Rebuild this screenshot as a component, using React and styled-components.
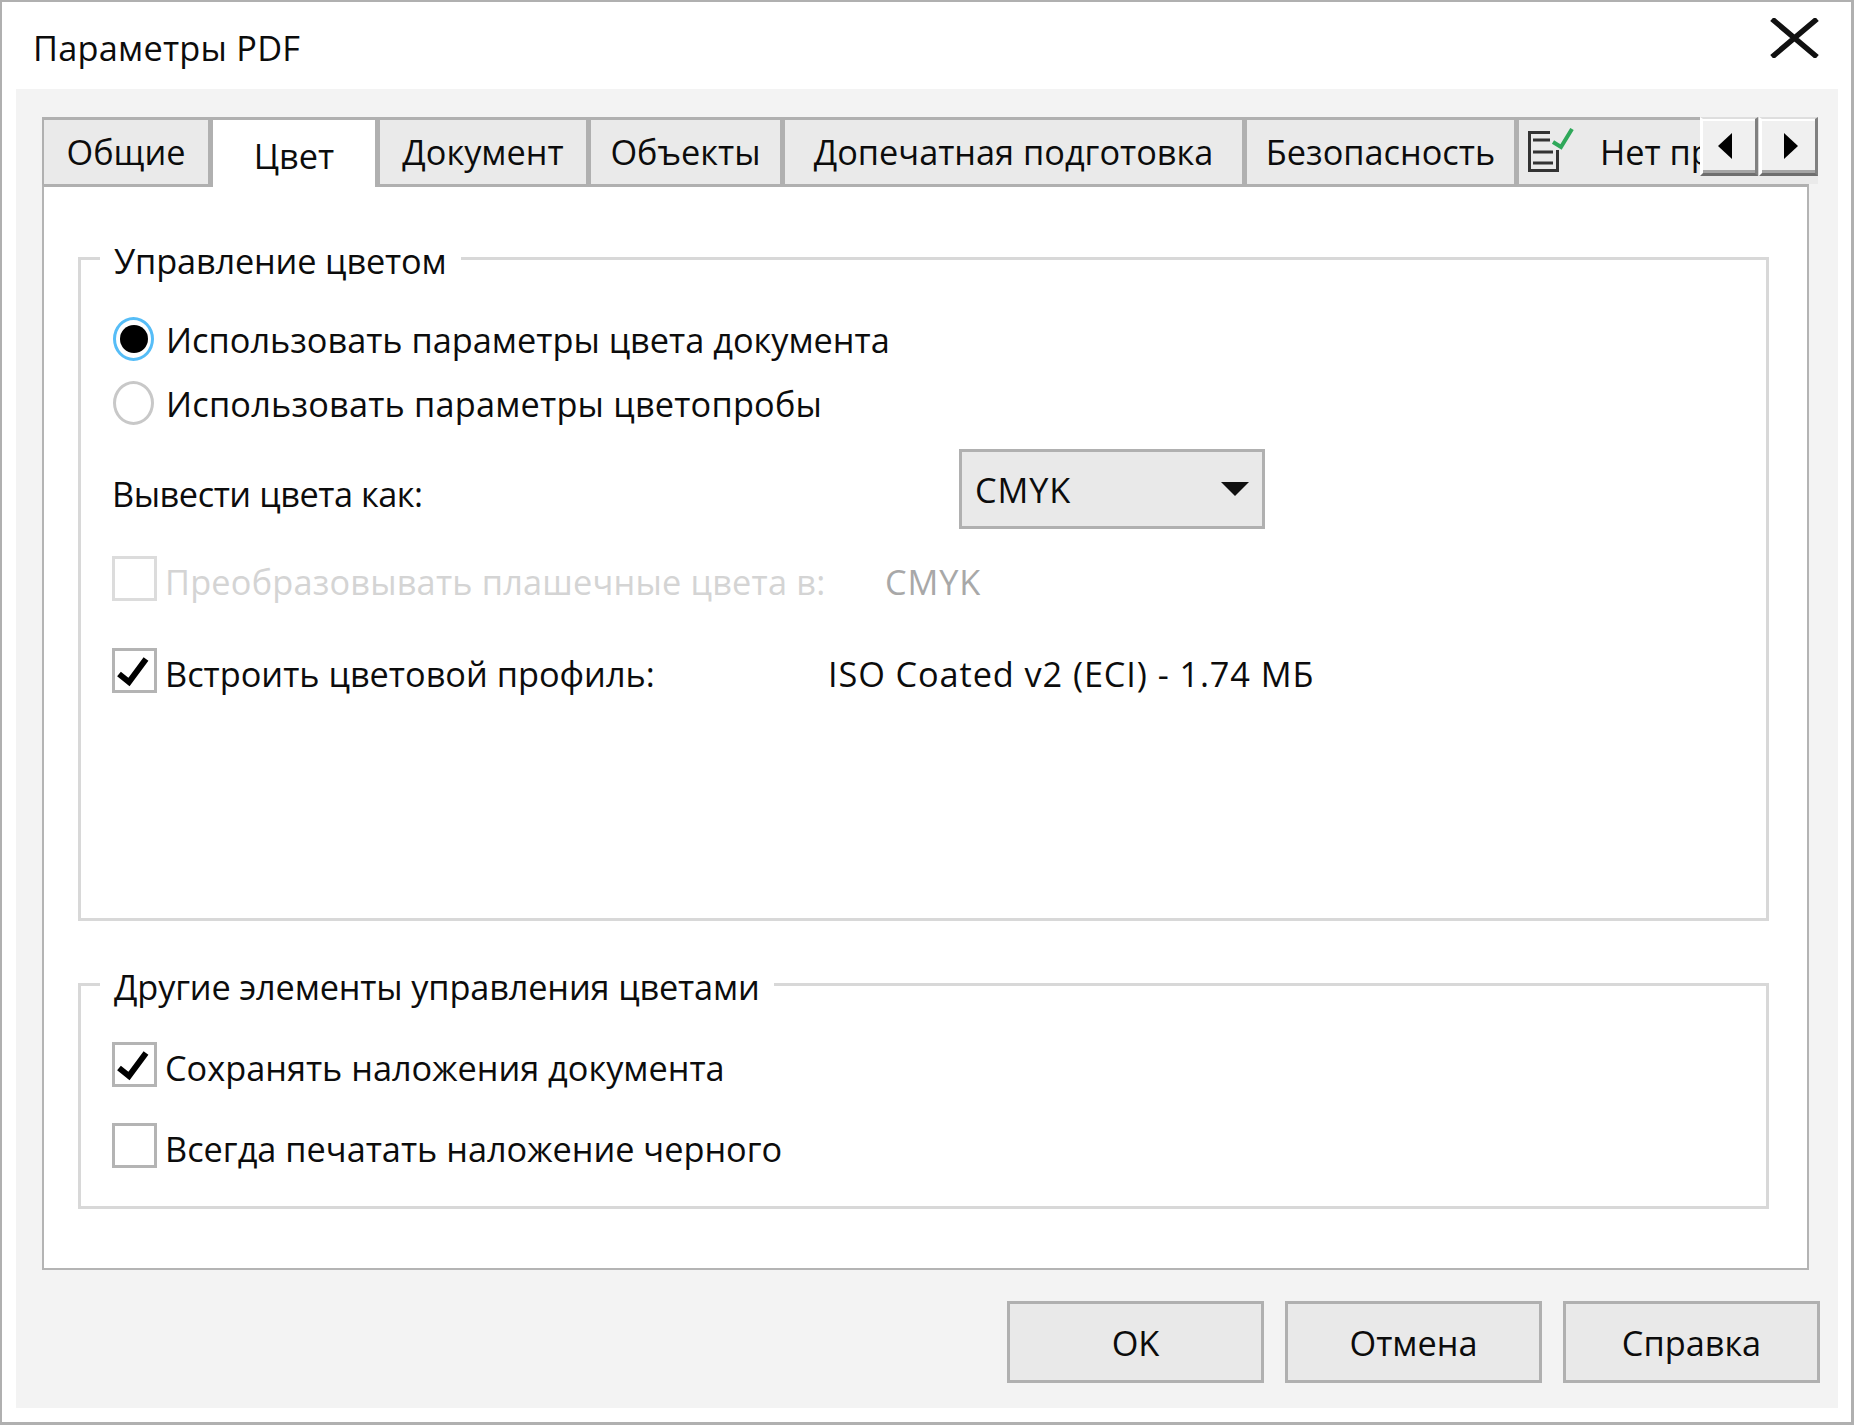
import React from 'react'
import styled, { createGlobalStyle } from 'styled-components'

const Global = createGlobalStyle`
	html, body { margin: 0; padding: 0; background: #fff; }
	body { font-family: "Open Sans", "Liberation Sans", sans-serif; font-size: 34.3px; color: #0c0c0c; }
	* { box-sizing: border-box; }
`

const Window = styled.div`
	width: 1854px;
	height: 1425px;
	border: 2px solid #b0b0b0;
	border-bottom-width: 3px;
	border-right-width: 3px;
	background: #fff;
	display: flex;
	flex-direction: column;
`

const TitleBar = styled.div`
	height: 87px;
	display: flex;
	align-items: center;
	justify-content: space-between;
	padding: 0 32px 0 31px;
`

const Title = styled.span`
	margin-top: 3px;
	letter-spacing: 0.25px;
`

const Body = styled.div`
	margin: 0 13px 0 14px;
	height: 1319px;
	background: #f3f3f3;
	padding: 28px 0 0 26px;
	display: flex;
	flex-direction: column;
`

const TabStrip = styled.div`
	width: 1776px;
	height: 67px;
	display: flex;
	position: relative;
	background: #eaeaea;
	border-top: 3px solid #b0b0b0;
`

const Tab = styled.div`
	width: ${p => p.$w}px;
	height: ${p => (p.$active ? 67 : 64)}px;
	flex: none;
	display: flex;
	align-items: center;
	justify-content: ${p => (p.$last ? 'flex-start' : 'center')};
	gap: 26px;
	padding-left: ${p => (p.$last ? 9 : 0)}px;
	padding-top: ${p => (p.$active ? 3 : 0)}px;
	padding-bottom: ${p => (p.$active ? 0 : 2)}px;
	white-space: nowrap;
	overflow: hidden;
	background: ${p => (p.$active ? '#fff' : '#eaeaea')};
	border-right: ${p => (p.$last ? 0 : 5)}px solid #b0b0b0;
	border-left: ${p => (p.$first ? 2 : 0)}px solid #b0b0b0;
	position: relative;
	z-index: ${p => (p.$active ? 1 : 0)};
`

const NavGroup = styled.div`
	position: absolute;
	top: -3px;
	right: 0;
	height: 59px;
	display: flex;
	gap: 1px;
	z-index: 2;
	background: #d8d8d8;
`

const NavButton = styled.div`
	width: ${p => p.$w}px;
	height: 59px;
	padding: 0 ${p => p.$pr || 0}px 0 ${p => p.$pl || 0}px;
	background: #f0f0f0;
	border-top: 2px solid #dedede;
	border-left: 3px solid #fff;
	border-right: 3px solid #808080;
	border-bottom: 3px solid #6e6e6e;
	box-shadow: inset 0 2px 0 #fff, inset 0 -3px 0 #a4a4a4;
	display: flex;
	align-items: center;
	justify-content: center;
`

const Panel = styled.div`
	width: 1767px;
	height: 1086px;
	background: #fff;
	border: 2px solid #b4b4b4;
	border-top: 3px solid #b0b0b0;
	padding: 51px 38px 0 34px;
	display: flex;
	flex-direction: column;
	gap: 43px;
`

const Group = styled.fieldset`
	margin: 0;
	padding: ${p => p.$top}px 0 0 31px;
	height: ${p => p.$h}px;
	border: 3px solid #d8d8d8;
	min-width: 0;
`

const Legend = styled.legend`
	margin-left: -12px;
	padding: 0 14px;
	line-height: 46px;
	height: 40px;
	letter-spacing: -0.15px;
`

const Row = styled.div`
	height: 64px;
	margin-top: ${p => p.$mt || 0}px;
	display: flex;
	align-items: center;
	white-space: nowrap;
`

const Check = styled.span`
	width: 45px;
	height: 45px;
	flex: none;
	margin-right: 8px;
	margin-top: -6px;
	background: #fff;
	border: 3px solid ${p => (p.$disabled ? '#dcdcdc' : '#b4b4b4')};
	display: flex;
	align-items: center;
	justify-content: center;
`

const Radio = styled.span`
	width: 41px;
	height: 44px;
	flex: none;
	margin: -1px 12px 0 1px;
	border-radius: 50%;
	background: #fff;
	border: 3px solid ${p => (p.$on ? '#56bdf7' : '#c8c8c8')};
	display: flex;
	align-items: center;
	justify-content: center;

	&::after {
		content: '';
		display: ${p => (p.$on ? 'block' : 'none')};
		width: 28px;
		height: 28px;
		border-radius: 50%;
		background: #000;
	}
`

const Label = styled.span`
	width: ${p => (p.$w ? p.$w + 'px' : 'auto')};
	flex: none;
	letter-spacing: ${p => p.$ls || 0}px;
	color: ${p => (p.$disabled ? '#d4d4d4' : 'inherit')};
`

const Latin = styled.span`
	letter-spacing: 0.9px;
	color: ${p => (p.$muted ? '#a8a8a8' : 'inherit')};
`

const Select = styled.div`
	width: 306px;
	height: 80px;
	margin-bottom: 8px;
	padding: 0 13px;
	background: #e9e9e9;
	border: 3px solid #b0b0b0;
	display: flex;
	align-items: center;
	justify-content: space-between;
`

const Footer = styled.div`
	margin-top: 31px;
	width: 1813px;
	margin-left: -26px;
	padding-left: 991px;
	display: flex;
	gap: 21px;
`

const Button = styled.div`
	width: 257px;
	height: 82px;
	background: #e9e9e9;
	border: 3px solid #b0b0b0;
	display: flex;
	align-items: center;
	justify-content: center;
`

const CloseSvg = styled.svg`
	margin-bottom: 15px;
`

const CloseIcon = () => (
	<CloseSvg width="49" height="40" viewBox="0 0 49 40">
		<path d="M2 1 L47 39 M47 1 L2 39" stroke="#111" strokeWidth="5.5" fill="none" />
	</CloseSvg>
)

const TickIcon = () => (
	<svg width="39" height="39" viewBox="0 0 39 39">
		<path d="M4 23 L14 31 L31 8" stroke="#000" strokeWidth="6" fill="none" />
	</svg>
)

const DocSvg = styled.svg`
	flex: none;
`

const DocIcon = () => (
	<DocSvg width="46" height="46" viewBox="0 0 46 46">
		<path d="M22 4.5 H1.5 V42.5 H29.5 V22" stroke="#333" strokeWidth="3" fill="none" />
		<path d="M5 12 H22 M5 24 H25 M5 35 H25" stroke="#333" strokeWidth="2.8" fill="none" />
		<path d="M25 14 L33 19 L44 1" stroke="#2fa85a" strokeWidth="4" fill="none" />
	</DocSvg>
)

const tabs = [
	{ label: 'Общие', w: 171, first: true },
	{ label: 'Цвет', w: 167, active: true },
	{ label: 'Документ', w: 211 },
	{ label: 'Объекты', w: 194 },
	{ label: 'Допечатная подготовка', w: 462 },
	{ label: 'Безопасность', w: 272 },
]

export default function App() {
	return (
		<Window>
			<Global />
			<TitleBar>
				<Title>Параметры PDF</Title>
				<CloseIcon />
			</TitleBar>
			<Body>
				<TabStrip>
					{tabs.map(t => (
						<Tab key={t.label} $w={t.w} $first={t.first} $active={t.active}>{t.label}</Tab>
					))}
					<Tab $w={299} $last><DocIcon />Нет проблем</Tab>
					<NavGroup>
						<NavButton $w={58} $pr={8}>
							<svg width="14" height="26" viewBox="0 0 14 26"><path d="M14 0 V26 L0 13 Z" fill="#000" /></svg>
						</NavButton>
						<NavButton $w={59} $pl={4}>
							<svg width="14" height="26" viewBox="0 0 14 26"><path d="M0 0 V26 L14 13 Z" fill="#000" /></svg>
						</NavButton>
					</NavGroup>
				</TabStrip>
				<Panel>
					<Group $h={683} $top={29}>
						<Legend>Управление цветом</Legend>
						<Row><Radio $on /><Label>Использовать параметры цвета документа</Label></Row>
						<Row><Radio /><Label $ls={0.2}>Использовать параметры цветопробы</Label></Row>
						<Row $mt={26}>
							<Label $w={847} $ls={-0.45}>Вывести цвета как:</Label>
							<Select>
								<Latin>CMYK</Latin>
								<svg width="28" height="14" viewBox="0 0 28 14"><path d="M0 0 H28 L14 14 Z" fill="#111" /></svg>
							</Select>
						</Row>
						<Row $mt={24}>
							<Check $disabled />
							<Label $w={720} $ls={0.2} $disabled>Преобразовывать плашечные цвета в:</Label>
							<Latin $muted>CMYK</Latin>
						</Row>
						<Row $mt={28}>
							<Check><TickIcon /></Check>
							<Label $w={663}>Встроить цветовой профиль:</Label>
							<Latin>ISO Coated v2 (ECI) - 1.74 МБ</Latin>
						</Row>
					</Group>
					<Group $h={245} $top={31}>
						<Legend>Другие элементы управления цветами</Legend>
						<Row><Check><TickIcon /></Check><Label>Сохранять наложения документа</Label></Row>
						<Row $mt={17}><Check /><Label>Всегда печатать наложение черного</Label></Row>
					</Group>
				</Panel>
				<Footer>
					<Button>OK</Button>
					<Button>Отмена</Button>
					<Button>Справка</Button>
				</Footer>
			</Body>
		</Window>
	)
}
